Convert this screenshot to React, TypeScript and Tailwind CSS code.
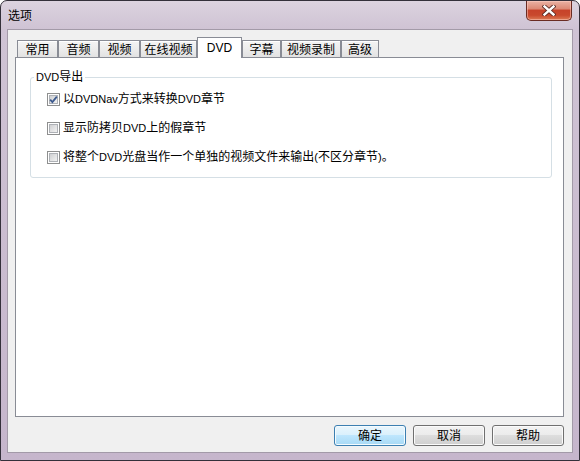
import React from "react";

const tabs = [
    { label: "常用", w: "w-[41px]" },
    { label: "音频", w: "w-[41px]" },
    { label: "视频", w: "w-[41px]" },
    { label: "在线视频", w: "w-[57px]" },
    { label: "DVD", w: "w-[45px]", active: true },
    { label: "字幕", w: "w-[39px]" },
    { label: "视频录制", w: "w-[60px]" },
    { label: "高级", w: "w-[38px]" },
];

const options = [
    { label: "以DVDNav方式来转换DVD章节", checked: true },
    { label: "显示防拷贝DVD上的假章节", checked: false },
    { label: "将整个DVD光盘当作一个单独的视频文件来输出(不区分章节)。", checked: false },
];

// latin runs render a bit smaller, like the Tahoma/SimSun mix of the original
function MixedText({ text }: { text: string }) {
    const parts = text.split(/([A-Za-z()]+)/).filter((p) => p !== "");
    return (
        <>
            {parts.map((p, i) =>
                /^[A-Za-z()]+$/.test(p) ? (
                    <span key={i} className="text-[11px]">
                        {p}
                    </span>
                ) : (
                    <span key={i}>{p}</span>
                )
            )}
        </>
    );
}

function CheckBox({ checked }: { checked: boolean }) {
    return (
        <div className="w-[13px] h-[13px] shrink-0 border border-[#8e8f8f] bg-white p-[1px]">
            <div className="relative w-full h-full border border-[#aeb1b6] bg-[linear-gradient(135deg,#cfd0d2_0%,#f2f2f2_100%)]">
                {checked && (
                    <svg className="absolute -left-[1px] -top-[1px]" width="9" height="9" viewBox="0 0 9 9">
                        <path d="M1.2 4.6 L3.4 7 L7.8 1.6" fill="none" stroke="#3d5a8e" strokeWidth="1.8" />
                    </svg>
                )}
            </div>
        </div>
    );
}

function DialogButton({ label, primary }: { label: string; primary?: boolean }) {
    return (
        <button
            className={
                primary
                    ? "w-[72px] h-[21px] rounded-[3px] border border-[#3c7fb1] shadow-[inset_0_0_0_1px_#f4fbfe] bg-[linear-gradient(to_bottom,#eaf6fd_0%,#d9f0fc_50%,#bee6fd_50%,#a7d9f5_100%)] text-[12px] leading-[14px] text-black"
                    : "w-[72px] h-[21px] rounded-[3px] border border-[#707070] shadow-[inset_0_0_0_1px_#fbfbfb] bg-[linear-gradient(to_bottom,#f2f2f2_0%,#ebebeb_50%,#dddddd_50%,#cfcfcf_100%)] text-[12px] leading-[14px] text-black"
            }
        >
            {label}
        </button>
    );
}

export default function App() {
    return (
        <div className="w-[580px] h-[461px] flex flex-col rounded-t-[7px] border border-[#34303a] bg-[linear-gradient(to_bottom,#dcd3df_0px,#cfc3d4_28px,#c6b6cc_100%)] font-['Liberation_Sans','Noto_Sans_CJK_SC',sans-serif] text-black">
            {/* Title bar */}
            <div className="h-[28px] flex items-start shrink-0">
                <span className="pl-[7px] pt-[8px] text-[12px] leading-[14px]">选项</span>
                <div className="ml-auto mr-[7px] w-[46px] h-[20px] rounded-b-[5px] border border-t-0 border-[#6a2b22] shadow-[inset_0_0_0_1px_rgba(255,210,200,0.5)] bg-[linear-gradient(to_bottom,#eab2a4_0%,#dc8a76_40%,#c7432a_50%,#c9492d_75%,#dc7b56_100%)] flex items-center justify-center">
                    <svg width="14" height="11" viewBox="0 0 14 11">
                        <path d="M2.5 1.5 L11.5 9.5 M11.5 1.5 L2.5 9.5" stroke="#5a2a24" strokeWidth="4.2" strokeLinecap="square" />
                        <path d="M2.5 1.5 L11.5 9.5 M11.5 1.5 L2.5 9.5" stroke="#ffffff" strokeWidth="2.4" strokeLinecap="square" />
                    </svg>
                </div>
            </div>

            {/* Client area */}
            <div className="flex-1 mx-[6px] mb-[7px] border border-[#a39aa8] bg-[#f0f0f0] flex flex-col pl-[7px] pr-[8px] pt-[7px] pb-[6px]">
                {/* Tabs */}
                <div className="flex items-end h-[20px] pl-[2px] relative z-10">
                    {tabs.map((t) =>
                        t.active ? (
                            <div
                                key={t.label}
                                className={`${t.w} h-[21px] -mb-[1px] border border-b-0 border-[#898c95] bg-white text-[12px] leading-[14px] pt-[3px] text-center`}
                            >
                                {t.label}
                            </div>
                        ) : (
                            <div
                                key={t.label}
                                className={`${t.w} h-[17px] border border-b-0 border-[#898c95] bg-[linear-gradient(to_bottom,#f4f4f4_0%,#ececec_50%,#e2e2e2_100%)] shadow-[inset_0_1px_0_#ffffff] text-[12px] leading-[14px] pt-[2px] text-center`}
                            >
                                {t.label}
                            </div>
                        )
                    )}
                </div>

                {/* Tab panel */}
                <div className="flex-1 border border-[#898c95] bg-white">
                    <fieldset className="mt-[12px] ml-[14px] w-[522px] border border-[#d5dfe5] rounded-[3px] pb-[13px]">
                        <legend className="ml-[3px] px-[2px] text-[12px] leading-[14px]">
                            <MixedText text="DVD导出" />
                        </legend>
                        <div className="flex flex-col gap-[15px] pl-[16px] pt-[8px]">
                            {options.map((o) => (
                                <div key={o.label} className="flex items-center gap-[3px] h-[14px]">
                                    <CheckBox checked={o.checked} />
                                    <span className="text-[12px] leading-[14px] whitespace-nowrap">
                                        <MixedText text={o.label} />
                                    </span>
                                </div>
                            ))}
                        </div>
                    </fieldset>
                </div>

                {/* Buttons */}
                <div className="flex justify-end gap-[7px] mt-[8px]">
                    <DialogButton label="确定" primary />
                    <DialogButton label="取消" />
                    <DialogButton label="帮助" />
                </div>
            </div>
        </div>
    );
}
